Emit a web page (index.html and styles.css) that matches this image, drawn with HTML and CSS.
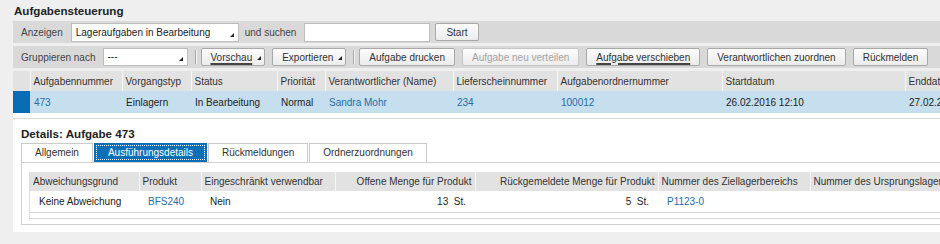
FILE: index.html
```html
<!DOCTYPE html>
<html>
<head>
  <meta charset="utf-8">
  <title>Aufgabensteuerung</title>
  <link rel="stylesheet" href="styles.css">
</head>
<body>
<div class="page">
  <h1 class="title">Aufgabensteuerung</h1>

  <!-- search bar -->
  <div class="toolbar">
    <span class="label">Anzeigen</span>
    <div class="select select_view"><span class="select_text">Lageraufgaben in Bearbeitung</span><span class="arrow"></span></div>
    <span class="label label_search">und suchen</span>
    <div class="input"></div>
    <div class="button button_start">Start</div>
  </div>

  <!-- actions -->
  <div class="toolbar toolbar_actions">
    <span class="label">Gruppieren nach</span>
    <div class="select select_group"><span class="select_text">---</span><span class="arrow"></span></div>
    <span class="sep"></span>
    <div class="button button_menu"><span class="focus_text">Vorschau</span><span class="arrow"></span></div>
    <div class="button button_menu">Exportieren<span class="arrow"></span></div>
    <span class="sep"></span>
    <div class="button">Aufgabe drucken</div>
    <div class="button disabled">Aufgabe neu verteilen</div>
    <div class="button"><span class="focus_text">Aufgabe verschieben</span></div>
    <div class="button">Verantwortlichen zuordnen</div>
    <div class="button">Rückmelden</div>
  </div>

  <div class="grid_wrap">
    <table class="grid">
      <colgroup>
        <col style="width:17px"><col style="width:92px"><col style="width:69px"><col style="width:86px">
        <col style="width:48px"><col style="width:128px"><col style="width:104px"><col style="width:165px">
        <col style="width:183px"><col style="width:100px">
      </colgroup>
      <tr>
        <th></th>
        <th>Aufgabennummer</th>
        <th>Vorgangstyp</th>
        <th>Status</th>
        <th>Priorität</th>
        <th>Verantwortlicher (Name)</th>
        <th>Lieferscheinnummer</th>
        <th>Aufgabenordnernummer</th>
        <th>Startdatum</th>
        <th>Enddatum</th>
      </tr>
      <tr class="selected">
        <td class="marker"></td>
        <td class="link">473</td>
        <td>Einlagern</td>
        <td>In Bearbeitung</td>
        <td>Normal</td>
        <td class="link">Sandra Mohr</td>
        <td class="link">234</td>
        <td class="link">100012</td>
        <td>26.02.2016 12:10</td>
        <td>27.02.2016 12:10</td>
      </tr>
    </table>
    <div class="grid_foot"></div>
  </div>

  <div class="details">
    <h2 class="details_title">Details: Aufgabe 473</h2>
    <div class="tabs">
      <div class="tab">Allgemein</div>
      <div class="tab active">Ausführungsdetails</div>
      <div class="tab">Rückmeldungen</div>
      <div class="tab">Ordnerzuordnungen</div>
    </div>
    <div class="tab_box">
      <div class="sub_wrap">
        <table class="sub">
          <colgroup>
            <col style="width:109px"><col style="width:62px"><col style="width:134px"><col style="width:140px">
            <col style="width:183px"><col style="width:152px"><col style="width:200px">
          </colgroup>
          <tr>
            <th>Abweichungsgrund</th>
            <th>Produkt</th>
            <th>Eingeschränkt verwendbar</th>
            <th class="num">Offene Menge für Produkt</th>
            <th class="num">Rückgemeldete Menge für Produkt</th>
            <th>Nummer des Ziellagerbereichs</th>
            <th>Nummer des Ursprungslagerbereichs</th>
          </tr>
          <tr>
            <td>Keine Abweichung</td>
            <td class="link">BFS240</td>
            <td>Nein</td>
            <td class="num">13&nbsp; St.</td>
            <td class="num">5&nbsp; St.</td>
            <td class="link">P1123-0</td>
            <td></td>
          </tr>
        </table>
        <div class="scroll_track"></div>
      </div>
    </div>
  </div>
</div>
</body>
</html>
```

FILE: styles.css
```css
body {
    margin: 0;
    width: 940px;
    height: 244px;
    overflow: hidden;
    background: #efefef;
    font-family: "Liberation Sans", Arial, sans-serif;
    font-size: 10px;
    color: #333;
}

.page {
    margin-left: 13px;
}

.title {
    margin: 0;
    padding: 1px 0 0 1px;
    font-size: 11.6px;
    line-height: 20px;
    font-weight: bold;
    color: #222;
}

/* toolbars */
.toolbar {
    display: flex;
    align-items: center;
    height: 22px;
    padding-left: 8px;
    background: #d9d9d9;
    white-space: nowrap;
}

.toolbar_actions {
    margin-top: 3px;
}

.label {
    color: #444;
}

.label_search {
    margin-left: 6px;
}

.select {
    display: flex;
    box-sizing: border-box;
    height: 19px;
    border: 1px solid #bdbdbd;
    background: #fff;
}

.select_text {
    flex: 1;
    padding-left: 4px;
    line-height: 17px;
    color: #222;
}

.select_view {
    width: 168px;
    margin-left: 8px;
}

.select_group {
    width: 85px;
    height: 18px;
    margin-left: 7px;
}

.select_group .select_text {
    line-height: 16px;
}

.arrow {
    width: 0;
    height: 0;
    border-left: 4px solid transparent;
    border-bottom: 4px solid #222;
    align-self: flex-end;
    margin: 0 4px 4px 0;
}

.input {
    box-sizing: border-box;
    width: 126px;
    height: 19px;
    margin-left: 8px;
    border: 1px solid #bdbdbd;
    background: #fff;
}

.sep {
    width: 1px;
    height: 14px;
    background: #a9a9a9;
    border-right: 1px solid #f3f3f3;
    margin: 0 4px 0 7px;
}

.button {
    display: flex;
    align-items: center;
    box-sizing: border-box;
    height: 18px;
    padding: 0 9px;
    margin-left: 7px;
    border: 1px solid #a9a9a9;
    border-radius: 2px;
    background: linear-gradient(#fcfcfc, #ececec);
    color: #333;
}

.sep + .button {
    margin-left: 0;
}

.button_start {
    margin-left: 5px;
    padding: 0 10px;
}

.button_menu {
    padding-right: 3px;
}

.button_menu .arrow {
    margin: 0 0 5px 5px;
}

.button.disabled {
    color: #a3a3a3;
    border-color: #c6c6c6;
}

.focus_text {
    text-decoration: underline;
    text-decoration-thickness: 2px;
    text-underline-offset: 2px;
    text-decoration-color: #444;
}

/* task list */
.grid_wrap {
    margin-top: 3px;
    overflow: hidden;
    background: #fff;
}

.grid,
.sub {
    border-collapse: collapse;
    table-layout: fixed;
}

.grid {
    width: 992px;
}

.grid th,
.sub th {
    height: 20px;
    padding: 0 3px;
    background: #e2e2e2;
    border-right: 1px solid #f6f6f6;
    font-weight: normal;
    text-align: left;
    white-space: nowrap;
    overflow: hidden;
    color: #333;
}

.grid td {
    height: 22px;
    padding: 0 4px;
    background: #c6dfee;
    white-space: nowrap;
    overflow: hidden;
    color: #222;
}

.grid .marker {
    padding: 0;
    background: #0a6cb5;
}

.grid td.link,
.sub td.link {
    color: #236cad;
}

.grid_foot {
    height: 5px;
    border-bottom: 1px solid #dadada;
}

/* details */
.details {
    padding: 7px 0 7px 8px;
    background: #fff;
}

.details_title {
    margin: 0 0 1px;
    font-size: 11.6px;
    line-height: 16px;
    font-weight: bold;
    color: #222;
}

.tabs {
    display: flex;
}

.tab {
    box-sizing: border-box;
    height: 19px;
    padding: 0 13px;
    margin-right: 1px;
    border: 1px solid #cacaca;
    border-bottom: none;
    line-height: 18px;
    background: #fff;
    white-space: nowrap;
    color: #333;
}

.tab.active {
    background: #0b6fb8;
    border-color: #0b6fb8;
    color: #fff;
    outline: 1px dotted #fff;
    outline-offset: -3px;
}

.tab_box {
    padding: 9px 0 5px 7px;
    border: 1px solid #d0d0d0;
    border-right: none;
    overflow: hidden;
}

.sub_wrap {
    border-left: 1px solid #dedede;
}

.sub {
    width: 980px;
}

.sub th {
    height: 19px;
}

.sub td {
    height: 21px;
    padding: 0 9px;
    border-bottom: 1px solid #d6d6d6;
    white-space: nowrap;
    color: #222;
}

.sub .num {
    text-align: right;
}

.scroll_track {
    height: 5px;
    border-bottom: 1px solid #d6d6d6;
}
```
